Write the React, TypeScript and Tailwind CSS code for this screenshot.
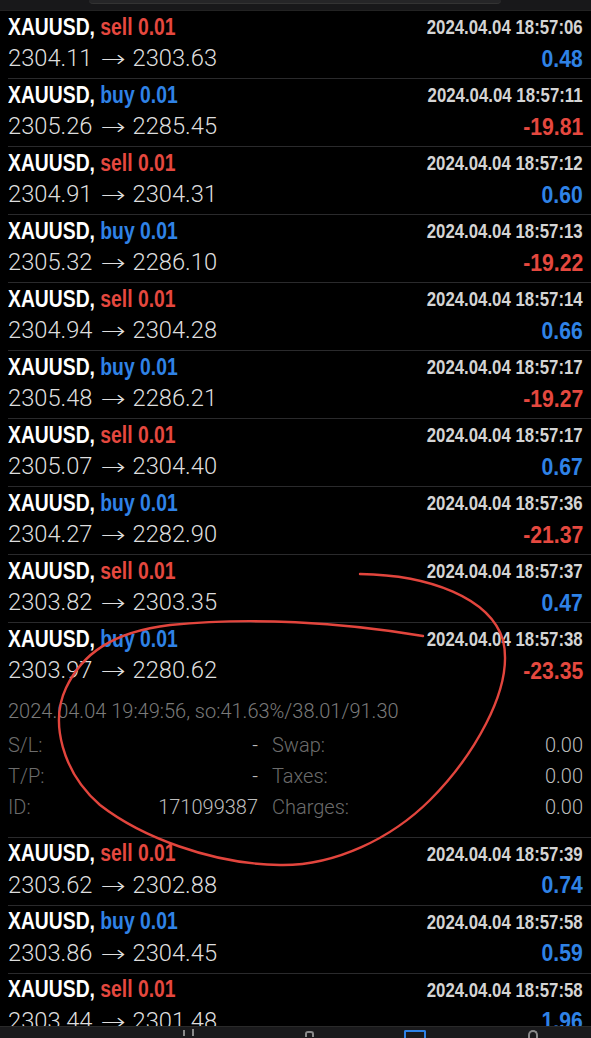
import React from "react";

type Trade = {
  side: "sell" | "buy";
  open: string;
  close: string;
  time: string;
  profit: string;
  expanded?: boolean;
};

const trades: Trade[] = [
  { side: "sell", open: "2304.11", close: "2303.63", time: "18:57:06", profit: "0.48" },
  { side: "buy", open: "2305.26", close: "2285.45", time: "18:57:11", profit: "-19.81" },
  { side: "sell", open: "2304.91", close: "2304.31", time: "18:57:12", profit: "0.60" },
  { side: "buy", open: "2305.32", close: "2286.10", time: "18:57:13", profit: "-19.22" },
  { side: "sell", open: "2304.94", close: "2304.28", time: "18:57:14", profit: "0.66" },
  { side: "buy", open: "2305.48", close: "2286.21", time: "18:57:17", profit: "-19.27" },
  { side: "sell", open: "2305.07", close: "2304.40", time: "18:57:17", profit: "0.67" },
  { side: "buy", open: "2304.27", close: "2282.90", time: "18:57:36", profit: "-21.37" },
  { side: "sell", open: "2303.82", close: "2303.35", time: "18:57:37", profit: "0.47" },
  { side: "buy", open: "2303.97", close: "2280.62", time: "18:57:38", profit: "-23.35", expanded: true },
  { side: "sell", open: "2303.62", close: "2302.88", time: "18:57:39", profit: "0.74" },
  { side: "buy", open: "2303.86", close: "2304.45", time: "18:57:58", profit: "0.59" },
  { side: "sell", open: "2303.44", close: "2301.48", time: "18:57:58", profit: "1.96" },
];

const BOLD = "font-['Liberation_Sans',sans-serif] font-bold";
const LIGHT = "font-['Roboto','Liberation_Sans',sans-serif] font-light";

function Row({ t }: { t: Trade }) {
  const neg = t.profit.startsWith("-");
  return (
    <div className="border-b border-[#2a2a2c] ml-2">
      <div className={`pr-2 pt-[1px] ${t.expanded ? "pb-[3px]" : "pb-[4px]"}`}>
        <div className="flex items-center justify-between h-[30px]">
          <div
            className={`${BOLD} inline-block origin-left scale-x-[0.84] whitespace-nowrap text-[23px] leading-none text-white`}
          >
            XAUUSD,{" "}
            <span className={t.side === "sell" ? "text-[#e5483f]" : "text-[#2f82e6]"}>
              {t.side} 0.01
            </span>
          </div>
          <div
            className={`${BOLD} inline-block origin-right scale-x-[0.84] whitespace-nowrap text-[20px] leading-none text-[#d4d4d4]`}
          >
            2024.04.04 {t.time}
          </div>
        </div>
        <div className="flex items-center justify-between h-[30px] mt-[2px]">
          <div className={`${LIGHT} flex items-center text-[23.7px] leading-none text-[#dedede] whitespace-nowrap`}>
            <span>{t.open}</span>
            <span className="ml-[8px] w-[26px] flex justify-center">
              <span className="font-['DejaVu_Sans',sans-serif] font-extralight text-[24px] inline-block scale-x-[1.25]">
                →
              </span>
            </span>
            <span className="ml-[6px]">{t.close}</span>
          </div>
          <div
            className={`${BOLD} inline-block origin-right scale-x-[0.92] text-[23px] leading-none ${
              neg ? "text-[#e5483f]" : "text-[#2f82e6]"
            }`}
          >
            {t.profit}
          </div>
        </div>
        {t.expanded && (
          <div className={`${LIGHT} text-[20px] leading-none pb-[11px]`}>
            <div className="h-[30px] mt-[10px] flex items-center text-[#7a7a7a] whitespace-nowrap">
              2024.04.04 19:49:56, so:41.63%/38.01/91.30
            </div>
            <div className="mt-[4px] flex flex-col gap-[0.5px]">
              {[
                ["S/L:", "-", "Swap:", "0.00"],
                ["T/P:", "-", "Taxes:", "0.00"],
                ["ID:", "171099387", "Charges:", "0.00"],
              ].map((r) => (
                <div key={r[0]} className="h-[30.5px] flex items-center">
                  <div className="w-[250px] flex justify-between">
                    <span className="text-[#6c6c6c]">{r[0]}</span>
                    <span className="text-[#bdbdbd]">{r[1]}</span>
                  </div>
                  <div className="flex-1 flex justify-between pl-[14px]">
                    <span className="text-[#6c6c6c]">{r[2]}</span>
                    <span className="text-[#bdbdbd]">{r[3]}</span>
                  </div>
                </div>
              ))}
            </div>
          </div>
        )}
      </div>
    </div>
  );
}

export default function App() {
  return (
    <div className="relative w-[591px] h-[1038px] overflow-hidden bg-black">
      <div className="h-[11px] bg-[#18181a] border-b border-[#222] flex justify-center">
        <div className="ml-[-2px] w-[412px] h-[4px] bg-[#252527] rounded-b-[4px] border-b border-[#333]" />
      </div>
      <div>
        {trades.map((t, i) => (
          <Row key={i} t={t} />
        ))}
      </div>

      <svg
        className="absolute left-0 top-0 pointer-events-none"
        width={591}
        height={1038}
        viewBox="0 0 591 1038"
      >
        <path
          d="M360 574 C 430 575, 490 598, 503 640 C 515 690, 470 760, 430 800 C 392 838, 335 866, 280 865 C 210 864, 140 836, 100 805 C 62 772, 50 722, 66 688 C 82 654, 112 632, 170 625 C 250 617, 340 622, 423 636"
          fill="none"
          stroke="#e2453d"
          strokeWidth={2.4}
          strokeLinecap="round"
        />
      </svg>

      <div className="absolute left-0 right-0 bottom-0 h-[12px] bg-[#1a1a1c] border-t border-[#2a2a2a]">
        <div className="absolute left-[183px] top-[3px] w-[2px] h-[6px] bg-[#8a8a8a]" />
        <div className="absolute left-[192px] top-[2px] w-[2px] h-[7px] bg-[#8a8a8a]" />
        <div className="absolute left-[305px] top-[4px] w-[9px] h-[6px] rounded-t-[3px] border-2 border-b-0 border-[#8a8a8a]" />
        <div className="absolute left-[404px] top-[3px] w-[22px] h-[8px] rounded-t-[2px] border-2 border-b-0 border-[#2f82e6]" />
        <div className="absolute left-[528px] top-[3px] w-[10px] h-[8px] rounded-t-full border-2 border-b-0 border-[#8a8a8a]" />
      </div>
    </div>
  );
}
